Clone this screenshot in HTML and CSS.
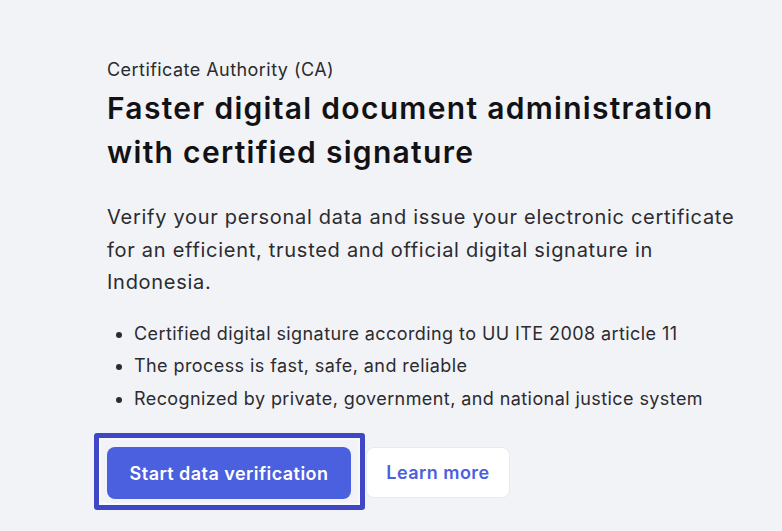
FILE: index.html
```html
<!DOCTYPE html>
<html lang="en">
<head>
  <meta charset="UTF-8">
  <meta name="viewport" content="width=device-width, initial-scale=1.0">
  <title>Certificate Authority</title>
  <link rel="stylesheet" href="styles.css">
</head>
<body>
  <section class="hero">
    <div class="eyebrow">Certificate Authority (CA)</div>
    <h1 class="title">Faster digital document administration with certified signature</h1>
    <p class="lead">Verify your personal data and issue your electronic certificate for an efficient, trusted and official digital signature in Indonesia.</p>
    <ul class="points">
      <li>Certified digital signature according to UU ITE 2008 article 11</li>
      <li>The process is fast, safe, and reliable</li>
      <li>Recognized by private, government, and national justice system</li>
    </ul>
    <div class="actions">
      <a class="btn btn-primary is-focused" href="#">Start data verification</a>
      <a class="btn btn-ghost" href="#">Learn more</a>
    </div>
  </section>
</body>
</html>
```

FILE: styles.css
```css
* {
  margin: 0;
  padding: 0;
  box-sizing: border-box;
}

html, body {
  min-height: 100%;
}

body {
  min-height: 531px;
  background-color: #f2f3f7;
  font-family: Inter, "Noto Sans", sans-serif;
  color: #1f1f24;
}

.hero {
  padding: 58px 0 40px 107px;
  width: 750px;
}

.eyebrow {
  font-size: 18px;
  line-height: 24px;
  letter-spacing: 0.45px;
  color: #2a2a2e;
}

.title {
  margin-top: 4px;
  font-size: 30px;
  line-height: 44px;
  font-weight: 600;
  letter-spacing: 1.3px;
  color: #121214;
}

.lead {
  margin-top: 27px;
  font-size: 20px;
  line-height: 32.5px;
  letter-spacing: 0.72px;
  color: #2b2b30;
}

.points {
  margin-top: 19px;
  padding-left: 27px;
  font-size: 18px;
  line-height: 32.5px;
  letter-spacing: 0.42px;
  color: #2b2b30;
}

.actions {
  display: flex;
  align-items: flex-start;
  gap: 15px;
  margin-top: 32px;
}

.btn {
  display: inline-flex;
  align-items: center;
  justify-content: center;
  height: 52px;
  border-radius: 8px;
  font-size: 18px;
  font-weight: 600;
  letter-spacing: 0.45px;
  text-decoration: none;
}

.btn-primary {
  position: relative;
  width: 244px;
  background-color: #4b60de;
  color: #fff;
}

/* focus ring drawn over the button */
.btn-primary.is-focused::after {
  content: "";
  position: absolute;
  top: -14px;
  right: -14px;
  bottom: -11px;
  left: -13px;
  border: 5px solid #3f47c7;
  border-radius: 3px;
  box-shadow: inset 0 0 0 2px #f8f9fc;
}

.btn-ghost {
  width: 144px;
  height: 51px;
  background-color: #fff;
  border: 1px solid #e7e9f4;
  color: #4b60de;
}
```
